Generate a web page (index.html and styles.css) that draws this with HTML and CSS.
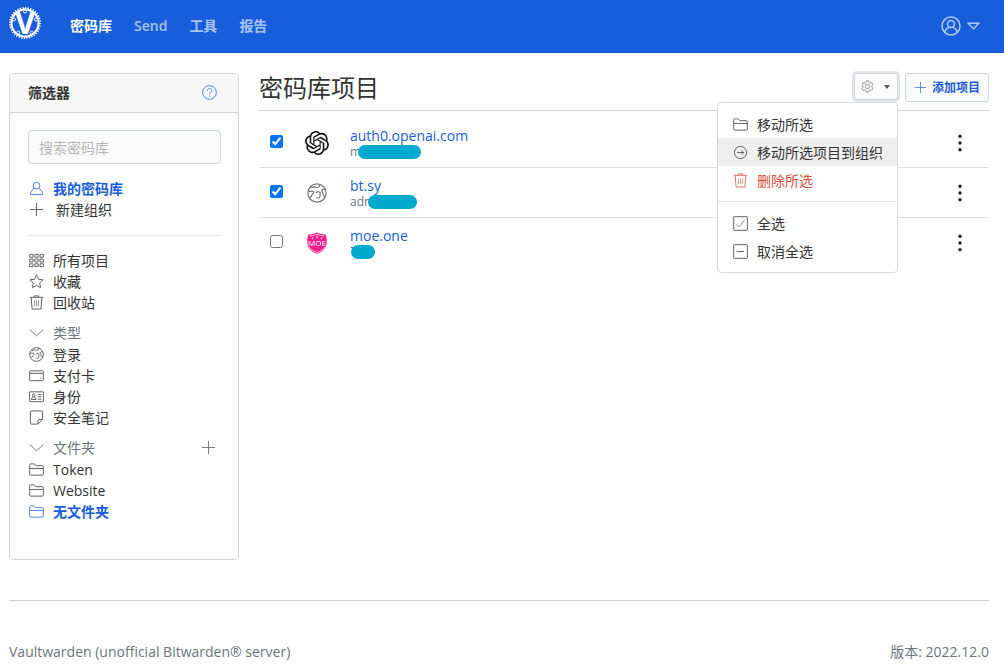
FILE: index.html
```html
<!DOCTYPE html>
<html lang="zh-CN">
<head>
<meta charset="utf-8">
<meta name="viewport" content="width=device-width, initial-scale=1">
<title>密码库 - Vaultwarden</title>
<link rel="stylesheet" href="styles.css">
</head>
<body>
<svg class="sprite" aria-hidden="true">
  <symbol id="i-user" viewBox="0 0 16 16"><circle cx="8" cy="4.9" r="3.6"/><path d="M1.5 14.5c0-4 2.4-5.8 4.6-6.5M14.5 14.5c0-4-2.4-5.8-4.6-6.5M1.5 14.5h13"/></symbol>
  <symbol id="i-plus" viewBox="0 0 16 16"><path d="M8 1v14M1 8h14"/></symbol>
  <symbol id="i-grid" viewBox="0 0 16 16"><path d="M.7 1.500h3.600v3H.7zM6.200 1.500h3.600v3H6.200zM11.700 1.500h3.600v3h-3.600zM.7 6.500h3.600v3H.7zM6.200 6.500h3.600v3H6.200zM11.700 6.500h3.600v3h-3.600zM.7 11.500h3.600v3H.7zM6.200 11.500h3.600v3H6.200zM11.700 11.500h3.600v3h-3.600z"/></symbol>
  <symbol id="i-star" viewBox="0 0 16 16"><path d="M8 1l2.100 4.600 5 .6-3.700 3.400 1 5L8 12.100l-4.400 2.500 1-5L.9 6.200l5-.6z"/></symbol>
  <symbol id="i-trash" viewBox="0 0 16 16"><path d="M.8 2.500h14.400M5.500 2.500V1h5v1.500M2.300 2.500l1 12.500h9.400l1-12.500"/><path opacity=".7" d="M5.800 5.500v6.500M8 5.500v6.500M10.200 5.500v6.500"/></symbol>
  <symbol id="i-down" viewBox="0 0 16 16"><path d="M.8 5l7.200 6.500L15.200 5"/></symbol>
  <symbol id="i-globe" viewBox="0 0 16 16"><circle cx="8" cy="8" r="7.300"/><path d="M3 3.500c1 .2 1.800.1 2.500-.4.700-.5 1.500 1 2.700.5 1.200-.2 2-.6 2-1.400L9.400 1M.9 6.800c1-.5 2 .1 3-.2 1-.2 1.700.4 1.300 1.400-.3.900-1.600 1-1.500 2 .1.900-.5 1.300-1.300 1.600M7 7.700c1-.6 1.300-.9 2.300-.7 1.200.2 1.400 1 1.200 2-.2 1 .2 2-.7 2.700-.8.700-2 .5-2-.4M14.700 5.300c-1.500-.5-2.500-.2-2.800.8-.3 1.100.9 1.400.9 2.400 0 1.100.2 2 1.400 2.200"/></symbol>
  <symbol id="i-card" viewBox="0 0 16 16"><rect x=".7" y="3" width="14.600" height="10.500" rx=".8"/><path d="M.7 5.700h14.600M11.500 11h1.500"/></symbol>
  <symbol id="i-id" viewBox="0 0 16 16"><rect x=".6" y="3" width="14.800" height="10.500" rx=".5"/><circle cx="5" cy="6.700" r="1.500"/><path d="M2.500 11.200c.2-2 1-2.700 2.500-2.700s2.300.7 2.500 2.700zM9.300 6h4M9.300 8.300h4M9.300 10.800h4"/></symbol>
  <symbol id="i-note" viewBox="0 0 16 16"><path d="M9.500 15H2.300a.8.8 0 0 1-.8-.8V1.800c0-.4.300-.8.800-.8h11.400c.5 0 .8.400.8.800V10zV10.800c0-.5.300-.8.800-.8h4.200"/></symbol>
  <symbol id="i-folder" viewBox="0 0 16 16"><path d="M.7 13V3c0-.6.400-1 1-1h3.600c.5 0 .8.200 1 .6l.8 1.300h7.200c.6 0 1 .4 1 1V13c0 .6-.4 1-1 1H1.700c-.6 0-1-.4-1-1zM.7 6.900h14.600"/></symbol>
  <symbol id="i-help" viewBox="0 0 16 16"><circle cx="8" cy="8" r="7.300"/><path d="M5.500 6.200c0-3.500 5-3.100 5-.3 0 1.900-2.500 1.900-2.500 4.100M8 11.500v1.100"/></symbol>
  <symbol id="i-gear" viewBox="0 0 16 16"><path d="M6.500 1h3l.5 2 1.300.8 2-.6 1.500 2.600-1.500 1.400v1.600l1.500 1.400-1.500 2.600-2-.6-1.300.8-.5 2h-3L6 13l-1.300-.8-2 .6-1.500-2.600 1.500-1.400V7.200L1.200 5.800l1.500-2.600 2 .6L6 3z"/><circle cx="8" cy="8" r="2.700"/></symbol>
  <symbol id="i-arrow" viewBox="0 0 16 16"><circle cx="8" cy="8" r="6.500"/><path d="M4.300 8h7M9 5.600L11.500 8 9 10.400"/></symbol>
  <symbol id="i-check" viewBox="0 0 16 16"><rect x=".7" y=".7" width="14.600" height="14.600" rx=".5"/><path opacity=".7" d="M3.700 9l2.700 2.500 5.800-7"/></symbol>
  <symbol id="i-minus" viewBox="0 0 16 16"><rect x=".7" y=".7" width="14.600" height="14.600" rx=".5"/><path d="M4 8h8"/></symbol>
  <symbol id="i-dots" viewBox="0 0 4 18"><circle cx="2" cy="2.200" r="1.700"/><circle cx="2" cy="9" r="1.700"/><circle cx="2" cy="15.800" r="1.700"/></symbol>
</svg>

<header class="navbar">
  <a class="brand" href="#" aria-label="Vaultwarden">
    <svg class="logo" viewBox="0 0 32 32"><circle class="logo-ring" cx="16" cy="16" r="13.500"/><circle class="logo-teeth" cx="16" cy="16" r="15" pathLength="72"/><g class="logo-bolts"><circle cx="16" cy="4.500" r="1.500"/><circle cx="5" cy="12.500" r="1.500"/><circle cx="27" cy="12.500" r="1.500"/><circle cx="9.300" cy="25.500" r="1.500"/><circle cx="22.700" cy="25.500" r="1.500"/></g><text class="logo-letter" x="16" y="27">V</text></svg>
  </a>
  <nav class="nav">
    <a class="nav-link active" href="#">密码库</a>
    <a class="nav-link" href="#">Send</a>
    <a class="nav-link" href="#">工具</a>
    <a class="nav-link" href="#">报告</a>
  </nav>
  <button class="account" type="button" aria-label="账户">
    <svg class="account-face" viewBox="0 0 20 20"><circle cx="10" cy="10" r="9"/><circle cx="10" cy="8" r="3.400"/><path d="M3.800 16.300c.5-3 2-4.300 4.300-4.900M16.200 16.300c-.5-3-2-4.300-4.300-4.900"/></svg>
    <svg class="account-caret" viewBox="0 0 14 8"><path d="M1.200 1h11.600L7 7z"/></svg>
  </button>
</header>

<div class="page">
  <main class="columns">
    <aside class="filters">
      <div class="filters-head">
        <h2 class="filters-title">筛选器</h2>
        <a class="help" href="#" aria-label="帮助"><svg class="icon"><use href="#i-help"/></svg></a>
      </div>
      <div class="filters-body">
        <input class="search" type="search" placeholder="搜索密码库" aria-label="搜索密码库">
        <ul class="list">
          <li><a class="filter active" href="#"><svg class="icon"><use href="#i-user"/></svg>我的密码库</a></li>
          <li><a class="filter create" href="#"><svg class="icon"><use href="#i-plus"/></svg>新建组织</a></li>
        </ul>
        <hr class="rule">
        <ul class="list">
          <li><a class="filter" href="#"><svg class="icon"><use href="#i-grid"/></svg>所有项目</a></li>
          <li><a class="filter" href="#"><svg class="icon"><use href="#i-star"/></svg>收藏</a></li>
          <li><a class="filter" href="#"><svg class="icon"><use href="#i-trash"/></svg>回收站</a></li>
        </ul>
        <div class="group-head"><button class="toggle" type="button"><svg class="icon"><use href="#i-down"/></svg>类型</button></div>
        <ul class="list">
          <li><a class="filter" href="#"><svg class="icon"><use href="#i-globe"/></svg>登录</a></li>
          <li><a class="filter" href="#"><svg class="icon"><use href="#i-card"/></svg>支付卡</a></li>
          <li><a class="filter" href="#"><svg class="icon"><use href="#i-id"/></svg>身份</a></li>
          <li><a class="filter" href="#"><svg class="icon"><use href="#i-note"/></svg>安全笔记</a></li>
        </ul>
        <div class="group-head"><button class="toggle" type="button"><svg class="icon"><use href="#i-down"/></svg>文件夹</button><button class="add-folder" type="button" aria-label="添加文件夹"><svg class="icon"><use href="#i-plus"/></svg></button></div>
        <ul class="list">
          <li><a class="filter" href="#"><svg class="icon"><use href="#i-folder"/></svg>Token</a></li>
          <li><a class="filter" href="#"><svg class="icon"><use href="#i-folder"/></svg>Website</a></li>
          <li><a class="filter active" href="#"><svg class="icon"><use href="#i-folder"/></svg>无文件夹</a></li>
        </ul>
      </div>
    </aside>

    <section class="vault">
      <div class="vault-head">
        <h1 class="vault-title">密码库项目</h1>
        <div class="actions">
          <div class="dropdown">
            <button class="button options" type="button" aria-label="选项" aria-expanded="true"><svg class="icon small"><use href="#i-gear"/></svg><span class="caret"></span></button>
            <div class="menu">
              <button class="menu-item" type="button"><svg class="icon"><use href="#i-folder"/></svg>移动所选</button>
              <button class="menu-item hovered" type="button"><svg class="icon"><use href="#i-arrow"/></svg>移动所选项目到组织</button>
              <button class="menu-item danger" type="button"><svg class="icon"><use href="#i-trash"/></svg>删除所选</button>
              <hr class="menu-rule">
              <button class="menu-item" type="button"><svg class="icon"><use href="#i-check"/></svg>全选</button>
              <button class="menu-item" type="button"><svg class="icon"><use href="#i-minus"/></svg>取消全选</button>
            </div>
          </div>
          <button class="button add" type="button"><svg class="icon small"><use href="#i-plus"/></svg>添加项目</button>
        </div>
      </div>
      <table class="items">
        <tbody>
          <tr>
            <td class="pick"><input class="box" type="checkbox" checked aria-label="auth0.openai.com"></td>
            <td class="site"><svg class="site-icon openai" viewBox="0 0 24 24"><path d="M22.2819 9.8211a5.9847 5.9847 0 0 0-.5157-4.9108 6.0462 6.0462 0 0 0-6.5098-2.9A6.0651 6.0651 0 0 0 4.9807 4.1818a5.9847 5.9847 0 0 0-3.9977 2.9 6.0462 6.0462 0 0 0 .7427 7.0966 5.98 5.98 0 0 0 .511 4.9107 6.051 6.051 0 0 0 6.5146 2.9001A5.9847 5.9847 0 0 0 13.2599 24a6.0557 6.0557 0 0 0 5.7718-4.2058 5.9894 5.9894 0 0 0 3.9977-2.9001 6.0557 6.0557 0 0 0-.7475-7.0729zm-9.022 12.6081a4.4755 4.4755 0 0 1-2.8764-1.0408l.1419-.0804 4.7783-2.7582a.7948.7948 0 0 0 .3927-.6813v-6.7369l2.02 1.1686a.071.071 0 0 1 .038.052v5.5826a4.504 4.504 0 0 1-4.4945 4.4944zm-9.6607-4.1254a4.4708 4.4708 0 0 1-.5346-3.0137l.142.0852 4.783 2.7582a.7712.7712 0 0 0 .7806 0l5.8428-3.3685v2.3324a.0804.0804 0 0 1-.0332.0615L9.74 19.9502a4.4992 4.4992 0 0 1-6.1408-1.6464zM2.3408 7.8956a4.485 4.485 0 0 1 2.3655-1.9728V11.6a.7664.7664 0 0 0 .3879.6765l5.8144 3.3543-2.0201 1.1685a.0757.0757 0 0 1-.071 0l-4.8303-2.7865A4.504 4.504 0 0 1 2.3408 7.872zm16.5963 3.8558L13.1038 8.364 15.1192 7.2a.0757.0757 0 0 1 .071 0l4.8303 2.7913a4.4944 4.4944 0 0 1-.6765 8.1042v-5.6772a.79.79 0 0 0-.407-.667zm2.0107-3.0231l-.142-.0852-4.7735-2.7818a.7759.7759 0 0 0-.7854 0L9.409 9.2297V6.8974a.0662.0662 0 0 1 .0284-.0615l4.8303-2.7866a4.4992 4.4992 0 0 1 6.6802 4.66zM8.3065 12.863l-2.02-1.1638a.0804.0804 0 0 1-.038-.0567V6.0742a4.4992 4.4992 0 0 1 7.3757-3.4537l-.142.0805L8.704 5.459a.7948.7948 0 0 0-.3927.6813zm1.0976-2.3654l2.602-1.4998 2.6069 1.4998v2.9994l-2.5974 1.4997-2.6067-1.4997Z"/></svg></td>
            <td class="name"><a class="item-link" href="#">auth0.openai.com</a><div class="login">m<span class="mask wide"></span></div></td>
            <td class="more"><button class="more-button" type="button" aria-label="更多"><svg class="dots"><use href="#i-dots"/></svg></button></td>
          </tr>
          <tr>
            <td class="pick"><input class="box" type="checkbox" checked aria-label="bt.sy"></td>
            <td class="site"><svg class="site-icon globe"><use href="#i-globe"/></svg></td>
            <td class="name"><a class="item-link" href="#">bt.sy</a><div class="login">adn<span class="mask medium"></span></div></td>
            <td class="more"><button class="more-button" type="button" aria-label="更多"><svg class="dots"><use href="#i-dots"/></svg></button></td>
          </tr>
          <tr>
            <td class="pick"><input class="box" type="checkbox" aria-label="moe.one"></td>
            <td class="site"><svg class="site-icon moe" viewBox="0 0 22 22"><path class="shield" d="M11 .5c2 1 5 1.700 8.500 2C21 6 21 9 20.500 12c-.8 5-4.500 8-9.500 9.700C6 20 2.300 17 1.500 12 1 9 1 6 2.500 2.500c3.500-.3 6.500-1 8.500-2z"/><path class="shield-line" d="M11 2.300c2 .8 4.200 1.300 7.200 1.600M3.800 3.900c3-.3 5.200-.8 7.200-1.600M3.200 15c1.600 2.700 4.500 4.300 7.800 5.300 3.300-1 6.200-2.600 7.800-5.300"/><path class="spark" d="M5.500 5.500l1 2 1-2zM10 4.500l1 2 1-2zM14.500 5.500l1 2 1-2z"/><text class="moe-text" x="11" y="14">MOE</text></svg></td>
            <td class="name"><a class="item-link" href="#">moe.one</a><div class="login">7<span class="mask short"></span></div></td>
            <td class="more"><button class="more-button" type="button" aria-label="更多"><svg class="dots"><use href="#i-dots"/></svg></button></td>
          </tr>
        </tbody>
      </table>
    </section>
  </main>

  <footer class="footer">
    <span>Vaultwarden (unofficial Bitwarden® server)</span>
    <span>版本: 2022.12.0</span>
  </footer>
</div>
</body>
</html>
```
FILE: styles.css
```css
* { box-sizing: border-box; }

body {
  margin: 0;
  background: #fff;
  color: #333;
  font-family: "Open Sans", "Noto Sans CJK SC", sans-serif;
  font-size: 14px;
  line-height: 21px;
}

a { color: inherit; text-decoration: none; }
button { font: inherit; color: inherit; background: none; border: 0; padding: 0; cursor: pointer; }
h1, h2 { margin: 0; }
.sprite { position: absolute; width: 0; height: 0; }

.icon { width: 15px; height: 15px; flex: none; fill: none; stroke: currentColor; stroke-width: 1; opacity: .8; }
.icon.small { width: 13px; height: 13px; }

/* Top bar */
.navbar { display: flex; align-items: center; height: 53px; padding: 0 24px 2px 9px; background: #175ddc; color: #fff; }
.brand { display: flex; height: 32px; margin-bottom: 5px; }
.logo { width: 32px; height: 32px; overflow: visible; fill: none; stroke: #fff; }
.logo-ring { stroke-width: 2; }
.logo-teeth { stroke-width: 2; stroke-dasharray: 1 1; }
.logo-bolts { fill: #175ddc; stroke-width: 1; }
.logo-letter { fill: #fff; stroke: none; font-size: 31px; line-height: 31px; font-weight: 700; text-anchor: middle; }
.nav { display: flex; gap: 22px; margin-left: 29px; }
.nav-link { color: #a9c4f3; font-weight: 600; }
.nav-link.active { color: #fff; font-weight: 700; }
.account { display: flex; align-items: center; gap: 6px; margin-left: auto; color: #b2c9f4; }
.account svg { fill: none; stroke: currentColor; stroke-width: 1.5; }
.account-face { width: 20px; height: 20px; }
.account-caret { width: 13px; height: 8px; }

.page { padding: 20px 15px 0 9px; }
.columns { display: flex; align-items: flex-start; gap: 20px; }

/* Filter card */
.filters { flex: 0 0 230px; border: 1px solid #ced4dc; border-radius: 4px; }
.filters-head { display: flex; align-items: center; justify-content: space-between; height: 39px; padding: 0 21px 1px 18px; background: #f7f7f7; border-bottom: 1px solid #ced4dc; border-radius: 3px 3px 0 0; }
.filters-title { font-size: 14px; font-weight: 700; line-height: 21px; }
.help { display: flex; color: #175ddc; }
.filters-body { padding: 17px 17px 37px 18px; }
.search { display: block; width: 100%; height: 34px; margin-bottom: 14px; padding: 0 10px; border: 1px solid #ced4dc; border-radius: 4px; background: #fbfbfb; color: #333; font: inherit; appearance: none; }
.search::placeholder { color: #b5b5b5; }
.list { margin: 0; padding: 0; list-style: none; }
.filter, .toggle { display: flex; align-items: center; gap: 9px; height: 21px; padding-left: 1px; }
.filter.create { gap: 12px; }
.filter.active { color: #175ddc; font-weight: 700; }
.rule { margin: 15px 0 14px; border: 0; border-top: 1px solid #e0e2e6; }
.group-head { display: flex; justify-content: space-between; margin: 9px 0 1px; color: #6c757d; }
.group-head .icon { opacity: 1; }
.add-folder { display: flex; align-items: center; padding-right: 5px; }

/* Item list */
.vault { flex: 1; min-width: 0; }
.vault-head { display: flex; justify-content: space-between; align-items: flex-start; height: 38px; margin-bottom: 6px; border-bottom: 1px solid #ced4dc; }
.vault-title { font-size: 24px; font-weight: 400; line-height: 30px; }
.actions { display: flex; gap: 7px; }
.dropdown { position: relative; }
.button { display: flex; align-items: center; justify-content: center; border: 1px solid #ced4dc; border-radius: 3px; background: #fbfbfb; font-size: 12px; }
.options { gap: 10px; width: 44px; height: 27px; color: #666; box-shadow: 0 0 0 2px #e2e6ea; }
.caret { border: 3px solid transparent; border-top: 4px solid #555; border-bottom: 0; }
.add { gap: 5px; height: 29px; padding: 0 8px; color: #175ddc; font-weight: 600; }
.menu { position: absolute; top: 29px; right: 0; z-index: 1; width: 181px; padding: 7px 0; border: 1px solid #d9dadc; border-radius: 4px; background: #fff; }
.menu-item { display: flex; align-items: center; gap: 9px; width: 100%; height: 28px; padding: 0 15px; white-space: nowrap; }
.menu-item.hovered { background: #efefef; }
.menu-item.danger { color: #dd4b39; }
.menu-rule { margin: 7px 0; border: 0; border-top: 1px solid #e0e2e6; }

.items { width: 100%; border-collapse: collapse; }
.items td { height: 50px; padding: 2px 0 0; vertical-align: middle; }
.items tr + tr { border-top: 1px solid #dde0e6; }
.pick { width: 45px; }
.box { display: block; width: 13px; height: 13px; margin: 0 0 3px 11px; accent-color: #0075ff; }
.items .site { width: 46px; padding-right: 20px; }
.site-icon { display: block; margin: auto; }
.openai { width: 24px; height: 24px; fill: #111; }
.globe { width: 20px; height: 20px; fill: none; stroke: #777; stroke-width: 1; }
.moe { width: 22px; height: 22px; }
.shield { fill: #f51c8b; }
.shield-line { fill: none; stroke: #ffc0df; stroke-width: 1; }
.spark { fill: #fff; }
.moe-text { fill: #fff; font-size: 8px; text-anchor: middle; }
.name { line-height: 18px; }
.item-link { color: #175ddc; }
.login { display: flex; align-items: center; height: 14px; color: #6c757d; font-size: 12px; }
.mask { height: 14px; border-radius: 7px; background: #00a9ce; }
.mask.wide { width: 63px; margin-left: -3px; }
.mask.medium { width: 49px; margin-left: -3px; }
.mask.short { width: 24px; margin-left: -6px; }
.more { width: 39px; }
.more-button { display: flex; justify-content: center; width: 20px; }
.dots { width: 4px; height: 18px; fill: #222; }

.footer { display: flex; justify-content: space-between; gap: 20px; margin-top: 40px; padding: 40px 0 2px; border-top: 1px solid #ced0d8; color: #6c757d; }
```
